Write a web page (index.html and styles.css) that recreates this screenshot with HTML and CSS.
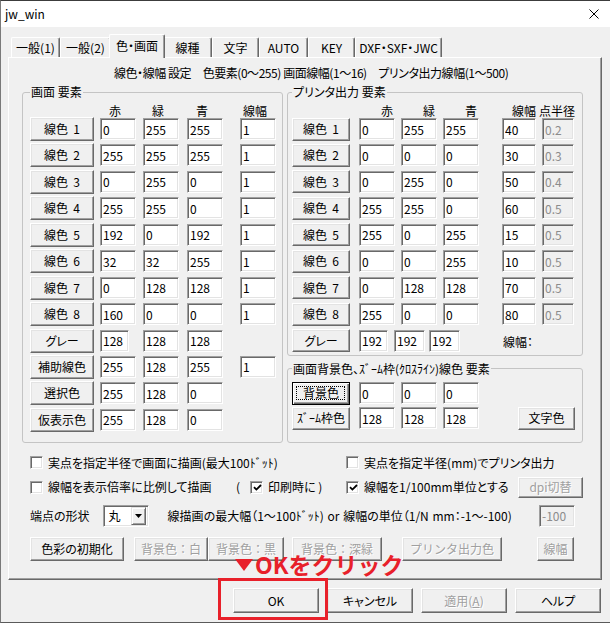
FILE: index.html
```html
<!DOCTYPE html>
<html lang="ja">
	<head>
		<meta charset="UTF-8" />
		<meta name="viewport" content="width=device-width, initial-scale=1.0" />
		<title>jw_win</title>
		<link rel="stylesheet" href="styles.css">
	</head>
	<body>
		<div class="window">
			<div class="titlebar">
				<span class="title">jw_win</span>
				<svg class="close" width="10" height="10" viewBox="0 0 10 10">
					<path d="M0.5 0.5L9.5 9.5M9.5 0.5L0.5 9.5" stroke="#000" stroke-width="1" fill="none" />
				</svg>
			</div>

			<div class="client">
				<div class="tabs">
					<div class="tab t-g1">一般(1)</div>
					<div class="tab t-g2">一般(2)</div>
					<div class="tab t-color active">色・画面</div>
					<div class="tab t-line">線種</div>
					<div class="tab t-text">文字</div>
					<div class="tab t-auto">AUTO</div>
					<div class="tab t-key">KEY</div>
					<div class="tab t-dxf">DXF・SXF・JWC</div>
				</div>

				<div class="panel">
					<div class="caption">線色・線幅 設定　色要素(0〜255) 画面線幅(1〜16)　プリンタ出力線幅(1〜500)</div>

					<div class="groups">
						<!-- 画面 -->
						<fieldset class="group screen">
							<legend>画面 要素</legend>
							<div class="row head">
								<span></span><span>赤</span><span>緑</span><span>青</span><span>線幅</span>
							</div>
							<div class="rows">
								<div class="row">
									<button class="btn">線色  1</button>
									<input class="edit" value="0"><input class="edit" value="255"><input class="edit" value="255"><input class="edit" value="1">
								</div>
								<div class="row">
									<button class="btn">線色  2</button>
									<input class="edit" value="255"><input class="edit" value="255"><input class="edit" value="255"><input class="edit" value="1">
								</div>
								<div class="row">
									<button class="btn">線色  3</button>
									<input class="edit" value="0"><input class="edit" value="255"><input class="edit" value="0"><input class="edit" value="1">
								</div>
								<div class="row">
									<button class="btn">線色  4</button>
									<input class="edit" value="255"><input class="edit" value="255"><input class="edit" value="0"><input class="edit" value="1">
								</div>
								<div class="row">
									<button class="btn">線色  5</button>
									<input class="edit" value="192"><input class="edit" value="0"><input class="edit" value="192"><input class="edit" value="1">
								</div>
								<div class="row">
									<button class="btn">線色  6</button>
									<input class="edit" value="32"><input class="edit" value="32"><input class="edit" value="255"><input class="edit" value="1">
								</div>
								<div class="row">
									<button class="btn">線色  7</button>
									<input class="edit" value="0"><input class="edit" value="128"><input class="edit" value="128"><input class="edit" value="1">
								</div>
								<div class="row">
									<button class="btn">線色  8</button>
									<input class="edit" value="160"><input class="edit" value="0"><input class="edit" value="0"><input class="edit" value="1">
								</div>
								<div class="row">
									<button class="btn">グレー</button>
									<input class="edit narrow" value="128"><input class="edit" value="128"><input class="edit" value="128">
								</div>
								<div class="row">
									<button class="btn">補助線色</button>
									<input class="edit" value="255"><input class="edit" value="128"><input class="edit" value="255"><input class="edit" value="1">
								</div>
								<div class="row">
									<button class="btn">選択色</button>
									<input class="edit" value="255"><input class="edit" value="128"><input class="edit" value="0">
								</div>
								<div class="row">
									<button class="btn">仮表示色</button>
									<input class="edit" value="255"><input class="edit" value="128"><input class="edit" value="0">
								</div>
							</div>
						</fieldset>

						<div class="right-col">
							<!-- プリンタ -->
							<fieldset class="group printer">
								<legend>プリンタ出力 要素</legend>
								<div class="row head">
									<span></span><span>赤</span><span>緑</span><span>青</span><span>線幅</span><span class="wide">点半径</span>
								</div>
								<div class="rows">
									<div class="row">
										<button class="btn">線色  1</button>
										<input class="edit" value="0"><input class="edit" value="255"><input class="edit" value="255"><input class="edit w34" value="40"><input class="edit w32" value="0.2" disabled>
									</div>
									<div class="row">
										<button class="btn">線色  2</button>
										<input class="edit" value="0"><input class="edit" value="0"><input class="edit" value="0"><input class="edit w34" value="30"><input class="edit w32" value="0.3" disabled>
									</div>
									<div class="row">
										<button class="btn">線色  3</button>
										<input class="edit" value="0"><input class="edit" value="255"><input class="edit" value="0"><input class="edit w34" value="50"><input class="edit w32" value="0.4" disabled>
									</div>
									<div class="row">
										<button class="btn">線色  4</button>
										<input class="edit" value="255"><input class="edit" value="255"><input class="edit" value="0"><input class="edit w34" value="60"><input class="edit w32" value="0.5" disabled>
									</div>
									<div class="row">
										<button class="btn">線色  5</button>
										<input class="edit" value="255"><input class="edit" value="0"><input class="edit" value="255"><input class="edit w34" value="15"><input class="edit w32" value="0.5" disabled>
									</div>
									<div class="row">
										<button class="btn">線色  6</button>
										<input class="edit" value="0"><input class="edit" value="0"><input class="edit" value="255"><input class="edit w34" value="10"><input class="edit w32" value="0.5" disabled>
									</div>
									<div class="row">
										<button class="btn">線色  7</button>
										<input class="edit" value="0"><input class="edit" value="128"><input class="edit" value="128"><input class="edit w34" value="70"><input class="edit w32" value="0.5" disabled>
									</div>
									<div class="row">
										<button class="btn">線色  8</button>
										<input class="edit" value="255"><input class="edit" value="0"><input class="edit" value="0"><input class="edit w34" value="80"><input class="edit w32" value="0.5" disabled>
									</div>
									<div class="row gray">
										<button class="btn">グレー</button>
										<input class="edit g1" value="192"><input class="edit g2" value="192"><input class="edit g3" value="192">
										<span class="width-label">線幅：</span>
									</div>
								</div>
							</fieldset>

							<!-- 背景色 -->
							<fieldset class="group bg">
								<legend>画面背景色、ｽﾞｰﾑ枠(ｸﾛｽﾗｲﾝ)線色 要素</legend>
								<div class="rows">
									<div class="row">
										<button class="btn default">背景色</button>
										<input class="edit" value="0"><input class="edit" value="0"><input class="edit" value="0">
									</div>
									<div class="row">
										<button class="btn zoom-btn">ｽﾞｰﾑ枠色</button>
										<input class="edit" value="128"><input class="edit" value="128"><input class="edit" value="128">
										<button class="btn text-color">文字色</button>
									</div>
								</div>
							</fieldset>
						</div>
					</div>

					<div class="options">
						<div class="opt-row r1">
							<div class="col-a">
								<label class="check"><span class="box"></span>実点を指定半径で画面に描画(最大100ﾄﾞｯﾄ)</label>
							</div>
							<label class="check"><span class="box"></span>実点を指定半径(mm)でプリンタ出力</label>
						</div>

						<div class="opt-row r2">
							<div class="col-a">
								<label class="check first"><span class="box"></span>線幅を表示倍率に比例して描画</label>
								<span class="paren">(</span>
								<label class="check"><span class="box"><svg width="9" height="9" viewBox="0 0 9 9"><path d="M1 4.2L3.4 6.6L8 2" stroke="#000" stroke-width="1.8" fill="none" /></svg></span>印刷時に )</label>
							</div>
							<label class="check"><span class="box"><svg width="9" height="9" viewBox="0 0 9 9"><path d="M1 4.2L3.4 6.6L8 2" stroke="#000" stroke-width="1.8" fill="none" /></svg></span>線幅を1/100mm単位とする</label>
							<button class="btn dis dpi">dpi切替</button>
						</div>

						<div class="opt-row r3">
							<span>端点の形状</span>
							<div class="combo">
								<span class="combo-value">丸</span>
								<span class="combo-btn"><svg width="7" height="4" viewBox="0 0 7 4"><path d="M0 0H7L3.5 4Z" fill="#000" /></svg></span>
							</div>
							<span class="max-width">線描画の最大幅（1〜100ﾄﾞｯﾄ) or 線幅の単位（1/N mm：-1〜-100)</span>
							<input class="edit unit" value="-100" disabled>
						</div>

						<div class="opt-row r4">
							<button class="btn b-init">色彩の初期化</button>
							<button class="btn dis b-white">背景色：白</button>
							<button class="btn dis b-black">背景色：黒</button>
							<button class="btn dis b-green">背景色：深緑</button>
							<button class="btn dis b-print">プリンタ出力色</button>
							<button class="btn dis b-width">線幅</button>
						</div>
					</div>
				</div>

				<div class="footer">
					<button class="btn dlg">OK</button>
					<button class="btn dlg">キャンセル</button>
					<button class="btn dlg dis">適用(<u>A</u>)</button>
					<button class="btn dlg">ヘルプ</button>
				</div>
			</div>

			<!-- 注釈 -->
			<div class="callout">
				<svg width="18" height="12" viewBox="0 0 18 12"><path d="M0 0H18L9 12Z" fill="#e8202a" /></svg>
				<span>OKをクリック</span>
			</div>
			<div class="highlight"></div>
		</div>
	</body>
</html>
```

FILE: styles.css
```css
:root {
	--face: #f0f0f0;
	--light: #e3e3e3;
	--highlight: #ffffff;
	--shadow: #a0a0a0;
	--dark-shadow: #696969;
	--gray-text: #a0a0a0;
	--group-line: #c4c4c4;
	--mark-red: #e8202a;
}

* {
	box-sizing: border-box;
	margin: 0;
	padding: 0;
}

body {
	font-family: 'Noto Sans CJK JP', 'Noto Sans', sans-serif;
	font-size: 12px;
	line-height: 14px;
	font-feature-settings: 'palt';
	color: #000;
	background: var(--face);
	width: 610px;
	height: 623px;
	overflow: hidden;
}

.window {
	position: relative;
	width: 610px;
	height: 623px;
	background: var(--face);
	border-top: 1px solid #3c3c3c;
	border-left: 1px solid #7a7a7a;
	border-bottom: 1px solid #5a5a5a;
}

/* Title bar */
.titlebar {
	height: 26px;
	background: #fff;
	display: flex;
	align-items: center;
	justify-content: space-between;
	padding: 0 11px 0 4px;
}

.title {
	font-feature-settings: normal;
}

/* Tabs */
.client {
	padding-top: 7px;
}

.tabs {
	display: flex;
	align-items: flex-end;
	height: 23px;
	padding-left: 10px;
	position: relative;
	z-index: 1;
}

.tab {
	height: 20px;
	line-height: 19px;
	text-align: center;
	white-space: nowrap;
	background: var(--face);
	border-top: 1px solid var(--highlight);
	border-left: 1px solid var(--highlight);
	border-right: 1px solid var(--dark-shadow);
	border-radius: 2px 2px 0 0;
	box-shadow: inset -1px 0 var(--shadow);
}

.tab.active {
	height: 24px;
	line-height: 22px;
	margin: 0 -2px -1px;
	position: relative;
	z-index: 2;
}

.t-g1 { width: 49px; }
.t-g2 { width: 51px; }
.t-color { width: 56px; }
.t-line { width: 49px; }
.t-text { width: 47px; }
.t-auto { width: 49px; }
.t-key { width: 47px; }
.t-dxf { width: 87px; }

/* Tab page */
.panel {
	margin-left: 7px;
	width: 594px;
	height: 523px;
	padding: 8px 18px 0 13px;
	border: 1px solid;
	border-color: var(--highlight) var(--dark-shadow) var(--dark-shadow) var(--highlight);
	box-shadow: inset -1px -1px var(--shadow);
}

.caption {
	height: 14px;
	padding-left: 92px;
	letter-spacing: -0.45px;
	white-space: nowrap;
}

.groups {
	display: flex;
	gap: 4px;
	margin-top: 5px;
}

.group {
	border: 1px solid var(--group-line);
	border-radius: 3px;
}

.group legend {
	line-height: 14px;
	padding: 0 1px;
	white-space: nowrap;
}

.rows {
	display: flex;
	flex-direction: column;
	gap: 2.45px;
}

.row {
	display: grid;
	grid-auto-rows: 24px;
	align-items: center;
	height: 24px;
}

.row.head {
	grid-auto-rows: 13px;
	height: 13px;
	line-height: 13px;
	white-space: nowrap;
}

/* 画面 要素 */
.screen {
	width: 261px;
	padding: 5px 6px 10px 7px;
}

.screen .row {
	grid-template-columns: 70px 43px 44px 53px 36px;
}

.screen .head span {
	width: 36px;
	padding-right: 6px;
	text-align: center;
}

.screen .btn {
	width: 64px;
	height: 24px;
}

/* プリンタ出力 要素 */
.right-col {
	width: 296px;
	display: flex;
	flex-direction: column;
	gap: 6px;
}

.printer {
	padding: 5px 8px 2px 4px;
}

.printer .row,
.bg .row {
	grid-template-columns: 67px 42px 42px 59px 40px 32px;
}

.printer .head span {
	width: 36px;
	padding-right: 2px;
	text-align: right;
}

.printer .head .wide {
	width: 37px;
	margin-left: -4px;
	padding-right: 0;
}

.printer .btn,
.bg .btn {
	width: 58px;
	height: 23px;
}

.printer .row.gray {
	display: flex;
}

.gray .g1 { width: 29px; margin-left: 9px; }
.gray .g2 { width: 31px; margin-left: 6px; }
.gray .g3 { width: 31px; margin-left: 4px; }

.width-label {
	margin-left: 43px;
	padding-top: 2px;
}

/* 背景色 */
.bg {
	padding: 6px 8px 12px 4px;
}

.bg .rows {
	gap: 2px;
}

.bg .row {
	grid-auto-rows: 23px;
	height: 23px;
}

.bg .btn.text-color {
	grid-column: 5 / 7;
	justify-self: end;
	width: 57px;
	margin-right: -1px;
}

.bg .zoom-btn {
	font-feature-settings: normal;
}

/* Classic controls */
.btn {
	font: inherit;
	color: #000;
	background: var(--face);
	white-space: pre;
	border: 1px solid;
	border-color: var(--highlight) var(--dark-shadow) var(--dark-shadow) var(--highlight);
	box-shadow: inset -1px -1px var(--shadow), inset 1px 1px var(--light);
	padding: 0;
	cursor: default;
}

.btn.dis {
	color: var(--gray-text);
	text-shadow: 1px 1px #fff;
}

.btn.default {
	position: relative;
	border-color: #000;
	box-shadow: inset 1px 1px var(--highlight), inset -1px -1px var(--dark-shadow), inset -2px -2px var(--shadow);
}

.btn.default::after {
	content: '';
	position: absolute;
	top: 3px;
	left: 3px;
	right: 4px;
	bottom: 4px;
	border: 1px dotted #000;
}

.edit {
	font: inherit;
	color: #000;
	background: #fff;
	width: 36px;
	height: 22px;
	padding: 0 0 0 2px;
	border: 1px solid;
	border-color: var(--shadow) var(--highlight) var(--highlight) var(--shadow);
	box-shadow: inset 1px 1px var(--dark-shadow), inset -1px -1px var(--light);
	outline: none;
}

.edit.narrow {
	width: 29px;
}

.edit.w34 {
	width: 34px;
}

.edit.w32 {
	width: 32px;
}

.edit:disabled {
	background: var(--face);
	color: #8c8c8c;
}

/* Options */
.options {
	padding-left: 8px;
}

.opt-row {
	display: flex;
	align-items: center;
	white-space: nowrap;
}

.r1 {
	height: 18px;
	margin-top: 11px;
}

.r2 {
	height: 21px;
	margin-top: 5px;
}

.r3 {
	height: 22px;
	margin-top: 7px;
}

.r4 {
	height: 24px;
	margin-top: 10px;
}

.col-a {
	width: 316px;
	display: flex;
	align-items: center;
}

.check {
	display: flex;
	align-items: center;
	gap: 5px;
}

.check.first {
	width: 206px;
}

.paren {
	width: 14px;
}

.box {
	width: 13px;
	height: 13px;
	background: #fff;
	border: 1px solid;
	border-color: var(--shadow) var(--highlight) var(--highlight) var(--shadow);
	box-shadow: inset 1px 1px var(--dark-shadow), inset -1px -1px var(--light);
	display: flex;
	align-items: center;
	justify-content: center;
}

.box svg {
	margin: 1px 0 0 1px;
}

.dpi {
	width: 65px;
	height: 21px;
	margin-left: auto;
}

.combo {
	width: 46px;
	height: 22px;
	margin-left: 13px;
	display: flex;
	align-items: center;
	justify-content: space-between;
	background: #fff;
	padding: 2px;
	border: 1px solid;
	border-color: var(--shadow) var(--highlight) var(--highlight) var(--shadow);
	box-shadow: inset 1px 1px var(--dark-shadow), inset -1px -1px var(--light);
}

.combo-value {
	padding-left: 3px;
}

.combo-btn {
	width: 15px;
	height: 18px;
	display: flex;
	align-items: center;
	justify-content: center;
	background: var(--face);
	border: 1px solid;
	border-color: var(--light) var(--dark-shadow) var(--dark-shadow) var(--light);
	box-shadow: inset 1px 1px var(--highlight), inset -1px -1px var(--shadow);
}

.max-width {
	margin-left: 19px;
	word-spacing: 1px;
}

.edit.unit {
	margin-left: auto;
	margin-right: 8px;
}

.r4 .btn {
	height: 24px;
}

.r4 .dis {
	font-feature-settings: normal;
}

.b-init { width: 94px; }
.b-white { width: 74px; margin-left: 10px; }
.b-black { width: 76px; }
.b-green { width: 90px; margin-left: 8px; }
.b-print { width: 100px; margin-left: 20px; }
.b-width { width: 37px; margin-left: 35px; }

/* Dialog buttons */
.footer {
	display: flex;
	justify-content: flex-end;
	gap: 8px;
	margin-top: 8px;
	padding-right: 9px;
}

.btn.dlg {
	width: 86px;
	height: 25px;
}

.btn.dlg u {
	text-decoration: underline;
}

/* Annotation */
.callout {
	position: absolute;
	left: 234px;
	top: 551px;
	display: flex;
	align-items: center;
	gap: 2px;
	color: var(--mark-red);
	font-size: 23px;
	font-weight: 700;
	line-height: 24px;
	font-feature-settings: normal;
	white-space: nowrap;
}

.callout svg {
	margin-top: 2px;
}

.highlight {
	position: absolute;
	left: 217px;
	top: 577px;
	width: 110px;
	height: 42px;
	border: 3px solid var(--mark-red);
}
```
